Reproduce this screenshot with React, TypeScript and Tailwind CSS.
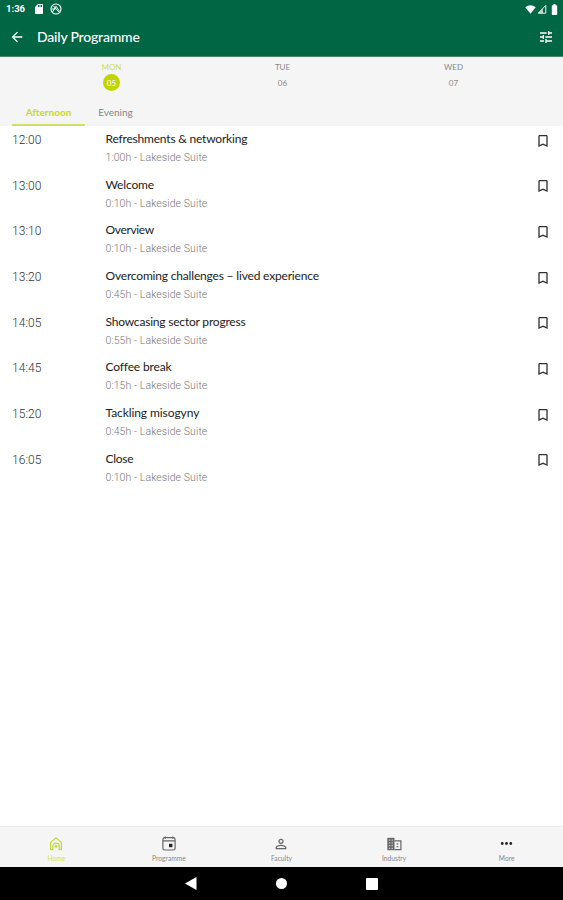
import React, { useState } from "react";
import {
  MdArrowBack,
  MdBatteryFull,
  MdBookmarkBorder,
  MdMoreHoriz,
  MdPersonOutline,
  MdSdCard,
  MdTune,
} from "react-icons/md";

type Session = {
  time: string;
  title: string;
  duration: string;
  tracking: string;
};

const days = [
  { name: "MON", date: "05" },
  { name: "TUE", date: "06" },
  { name: "WED", date: "07" },
];

const sessions: Session[] = [
  { time: "12:00", title: "Refreshments & networking", duration: "1:00h", tracking: "tracking-[-0.2px]" },
  { time: "13:00", title: "Welcome", duration: "0:10h", tracking: "tracking-[-0.15px]" },
  { time: "13:10", title: "Overview", duration: "0:10h", tracking: "tracking-[-0.35px]" },
  { time: "13:20", title: "Overcoming challenges – lived experience", duration: "0:45h", tracking: "tracking-[-0.18px]" },
  { time: "14:05", title: "Showcasing sector progress", duration: "0:55h", tracking: "tracking-[-0.2px]" },
  { time: "14:45", title: "Coffee break", duration: "0:15h", tracking: "tracking-[-0.15px]" },
  { time: "15:20", title: "Tackling misogyny", duration: "0:45h", tracking: "tracking-[-0.08px]" },
  { time: "16:05", title: "Close", duration: "0:10h", tracking: "tracking-[-0.3px]" },
];

const HomeIcon = () => (
  <svg width="14" height="14" viewBox="0 0 14 14" fill="none" stroke="currentColor" strokeWidth="1.2">
    <path d="M1.6 12.7V5.4L7 1l5.4 4.4v7.3h-2.2M1.6 12.7h2.2M3.8 12.7V9.4a3.2 3.2 0 0 1 6.4 0v3.3" strokeLinejoin="round" />
    <circle cx="7" cy="9.3" r="1.4" fill="currentColor" stroke="none" />
  </svg>
);

const CalendarIcon = () => (
  <svg width="14" height="15" viewBox="0 0 14 15" fill="none" stroke="currentColor" strokeWidth="1.2">
    <rect x="0.9" y="1.6" width="12.2" height="12.4" rx="1.8" />
    <path d="M1 4.9h12M3.3 0.5v2.2M10.7 0.5v2.2" />
    <rect x="7" y="7.8" width="3.4" height="3.4" fill="#222" stroke="none" />
  </svg>
);

const IndustryIcon = () => (
  <svg width="15" height="14" viewBox="0 0 15 14" fill="none" stroke="currentColor">
    <path d="M0.3 0.8h7.2v12.4H0.3z" fill="currentColor" stroke="none" />
    <path d="M1.8 3.1h4.5M1.8 5.9h4.5M1.8 8.7h4.5M1.8 11.3h4.5" stroke="#f5f5f5" strokeWidth="0.8" strokeDasharray="1.5 1.2" />
    <path d="M7.5 3.8h6.4v8.8H7.5" strokeWidth="1.2" />
    <path d="M9.6 6.8h1.7M9.6 9.7h1.7" strokeWidth="1.2" />
  </svg>
);

const navItems = [
  { label: "Home", icon: <HomeIcon /> },
  { label: "Programme", icon: <CalendarIcon /> },
  { label: "Faculty", icon: <MdPersonOutline size={16} /> },
  { label: "Industry", icon: <IndustryIcon /> },
  { label: "More", icon: <MdMoreHoriz size={17} className="text-[#222]" /> },
];

const StatusBar = () => (
  <div className="flex h-[18px] items-center justify-between pl-[6px] pr-[2px] text-white">
    <div className="flex items-center">
      <span className="w-[27px] font-[Roboto] text-[9.5px] font-bold leading-none">1:36</span>
      <MdSdCard size={12} />
      <svg className="ml-[5px]" width="12" height="12" viewBox="0 0 12 12" fill="none" stroke="currentColor">
        <circle cx="6" cy="6" r="5" strokeWidth="1.1" />
        <path d="M2.4 9.2 6 3.2l3.6 5.2M3.5 3l5.4 6M2 6h3.5" strokeWidth="1" />
      </svg>
    </div>
    <div className="flex items-center">
      <svg width="11" height="9" viewBox="0 0 11 9" fill="currentColor">
        <path d="M0.3 2.3Q5.5-1.8 10.7 2.3L5.5 8.8z" />
      </svg>
      <svg className="ml-px" width="10" height="10" viewBox="0 0 10 10" fill="none" stroke="currentColor">
        <path d="M1.2 9.2 8.8 1.4v7.8z" strokeWidth="0.9" />
        <path d="M1.2 9.2 6 4.5v4.7z" fill="currentColor" stroke="none" opacity="0.7" />
      </svg>
      <MdBatteryFull size={13} className="ml-px" />
    </div>
  </div>
);

const App: React.FC = () => {
  const [activeDay, setActiveDay] = useState("05");
  const [period, setPeriod] = useState("Afternoon");

  return (
    <div className="flex h-[900px] w-full flex-col overflow-hidden bg-white font-['Lato','Liberation_Sans',sans-serif]">
      <header className="h-[57px] shrink-0 border-b border-[#4f8560] bg-[#006643]">
        <StatusBar />
        <div className="flex h-[38px] items-center pl-[9px] pr-[9px] text-white">
          <MdArrowBack size={16} />
          <h1 className="ml-[12px] flex-1 text-[14px] font-medium leading-none tracking-[-0.2px]">Daily Programme</h1>
          <MdTune size={16} />
        </div>
      </header>

      {/* Days and periods */}
      <div className="h-[69px] shrink-0 bg-[#f5f5f5]">
        <div className="grid h-[41px] grid-cols-3 pl-[26px] pr-[24px] pt-[5px]">
          {days.map((day) => {
            const active = day.date === activeDay;
            return (
              <button key={day.date} onClick={() => setActiveDay(day.date)} className="flex flex-col items-center text-[8px] leading-[10px] text-[#888]">
                <span className={active ? "text-[#cbdc5e]" : ""}>{day.name}</span>
                <span className={`mt-[2px] flex h-[17px] w-[17px] items-center justify-center rounded-full ${active ? "bg-[#c1d500] text-white" : ""}`}>
                  {day.date}
                </span>
              </button>
            );
          })}
        </div>
        <div className="flex h-[28px] pl-[12px] text-[10px]">
          {["Afternoon", "Evening"].map((item) => (
            <button
              key={item}
              onClick={() => setPeriod(item)}
              className={`flex flex-col items-center ${item === "Afternoon" ? "w-[73px]" : "w-[61px]"} ${item === period ? "font-bold text-[#c5da2b]" : "text-[#858585]"}`}
            >
              <span className="h-[26px] pt-[2px] leading-[24px]">{item}</span>
              <span className={`h-[2px] w-full shrink-0 ${item === period ? "bg-[#d2e165]" : ""}`} />
            </button>
          ))}
        </div>
      </div>

      {/* Session list */}
      <main className="flex-1 pt-[5px]">
        {sessions.map((session) => (
          <div key={session.time} className="flex h-[45.7px] pl-[12px] pr-[12px]">
            <span className="w-[93.5px] pt-px font-[Roboto] text-[12px] font-light leading-[17px] tracking-[0.05px] text-[#333]">{session.time}</span>
            <div className="flex-1">
              <h2 className={`text-[12px] leading-[16px] text-[#222] ${session.tracking}`}>{session.title}</h2>
              <p className="mt-[4px] font-[Roboto] text-[10.5px] font-light leading-[14px] tracking-[0.09px] text-[#777]">{session.duration} - Lakeside Suite</p>
            </div>
            <MdBookmarkBorder size={16} className="mt-[1.5px] text-[#333]" />
          </div>
        ))}
      </main>

      <nav className="grid h-[41px] shrink-0 grid-cols-5 border-t border-[#e9e9e9] bg-[#f5f5f5]">
        {navItems.map((item, index) => (
          <button key={item.label} className={`flex flex-col items-center pt-[8px] ${index === 0 ? "text-[#c1d72e]" : "text-[#666]"}`}>
            <span className="flex h-[17px] items-center">{item.icon}</span>
            <span className={`mt-[2px] text-[6.7px] leading-[8px] ${index === 0 ? "text-[#d0df6d]" : "text-[#888]"}`}>{item.label}</span>
          </button>
        ))}
      </nav>

      {/* System navigation */}
      <div className="flex h-[33px] shrink-0 items-center justify-center gap-[79px] bg-black">
        <svg width="12" height="13" viewBox="0 0 12 13" fill="#fff"><path d="M0 6.5 11.5 0v13z" /></svg>
        <span className="h-[11px] w-[11px] rounded-full bg-white" />
        <span className="h-[12px] w-[12px] rounded-[1px] bg-white" />
      </div>
    </div>
  );
};

export default App;
